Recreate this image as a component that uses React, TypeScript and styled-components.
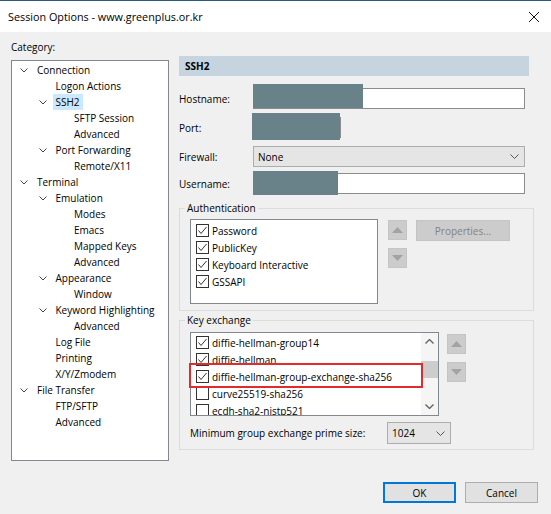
import React from "react";
import styled, { createGlobalStyle } from "styled-components";

const GlobalStyle = createGlobalStyle`
  html, body { margin: 0; padding: 0; background: #f0f0f0; }
  body { font-family: "Open Sans", "Noto Sans", sans-serif; font-size: 10px; color: #000; }
  * { box-sizing: border-box; }
`;

const Window = styled.div`
  width: 551px;
  height: 514px;
  background: #f0f0f0;
  display: flex;
  flex-direction: column;
  overflow: hidden;
`;

const TitleBar = styled.div`
  height: 32px;
  background: #fff;
  border-top: 1px solid #2b5a80;
  display: flex;
  align-items: center;
  justify-content: space-between;
  padding: 0 10px 0 8px;
`;

const TitleText = styled.span`
  font-size: 10.8px;
  color: #000;
`;

const CloseBtn = styled.span`
  display: flex;
  width: 12px;
  height: 12px;
  margin-right: 1px;
`;

const Content = styled.div`
  display: flex;
  height: 429px;
`;

const LeftCol = styled.div`
  width: 169px;
  padding: 8px 0 0 11px;
  display: flex;
  flex-direction: column;
`;

const CatLabel = styled.div`
  line-height: 14px;
  height: 14px;
  margin-bottom: 6px;
`;

const TreeBox = styled.div`
  width: 158px;
  height: 401px;
  background: #fff;
  border: 1px solid #828790;
  padding-top: 1px;
`;

const TreeRow = styled.div<{ $level: number }>`
  height: 16px;
  line-height: 16px;
  display: flex;
  align-items: center;
  padding-left: ${(p) => 8 + p.$level * 18.5}px;
  white-space: nowrap;
`;

const ChevSlot = styled.span`
  width: 17px;
  flex: none;
  display: flex;
  align-items: center;
`;

const TreeLabel = styled.span<{ $selected?: boolean }>`
  padding: 0 3px;
  margin-left: -3px;
  height: 16px;
  background: ${(p) => (p.$selected ? "#cce8ff" : "transparent")};
`;

const RightCol = styled.div`
  margin-left: 10px;
  padding-top: 24px;
  width: 355px;
  display: flex;
  flex-direction: column;
`;

const Header = styled.div`
  width: 350px;
  height: 20px;
  background: #c6d4e0;
  font-weight: 700;
  line-height: 20px;
  padding-left: 6px;
`;

const Form = styled.div`
  margin-top: 12px;
  display: flex;
  flex-direction: column;
`;

const FormRow = styled.div<{ $mt: number }>`
  display: flex;
  align-items: center;
  height: 21px;
  margin-top: ${(p) => p.$mt}px;
`;

const FieldLabel = styled.span`
  width: 74px;
  flex: none;
`;

const FieldWrap = styled.div<{ $w: number }>`
  position: relative;
  width: ${(p) => p.$w}px;
  height: 21px;
`;

const TextInput = styled.div`
  width: 100%;
  height: 100%;
  background: #fff;
  border: 1px solid #8c8c8c;
`;

const Redact = styled.div<{ $l: number; $t: number; $w: number; $h: number }>`
  position: absolute;
  left: ${(p) => p.$l}px;
  top: ${(p) => p.$t}px;
  width: ${(p) => p.$w}px;
  height: ${(p) => p.$h}px;
  background: #698189;
`;

const Select = styled.div<{ $w: number; $h: number }>`
  width: ${(p) => p.$w}px;
  height: ${(p) => p.$h}px;
  background: #e5e5e5;
  border: 1px solid #adadad;
  display: flex;
  align-items: center;
  justify-content: space-between;
  padding: 0 5px 0 4px;
  flex: none;
`;

const Group = styled.fieldset<{ $mt: number }>`
  margin: ${(p) => p.$mt}px 0 0 0;
  padding: 0;
  border: 1px solid #dcdcdc;
  width: 355px;
  min-width: 0;
`;

const Legend = styled.legend`
  margin-left: 5px;
  padding: 0 2px;
  line-height: 14px;
  height: 14px;
`;

const GroupInner = styled.div<{ $pt: number; $pb: number }>`
  padding: ${(p) => p.$pt}px 10px ${(p) => p.$pb}px 10px;
  display: flex;
  flex-direction: column;
`;

const GroupRow = styled.div`
  display: flex;
  align-items: flex-start;
`;

const ListBox = styled.div<{ $w: number; $h: number; $pt: number }>`
  position: relative;
  width: ${(p) => p.$w}px;
  height: ${(p) => p.$h}px;
  background: #fff;
  border: 1px solid #828790;
  padding-top: ${(p) => p.$pt}px;
  display: flex;
  flex: none;
`;

const ListItems = styled.div`
  flex: 1;
  overflow: hidden;
`;

const ListItem = styled.div`
  height: 17px;
  display: flex;
  align-items: center;
  padding-left: 5px;
  white-space: nowrap;
`;

const CheckBox = styled.span`
  width: 13px;
  height: 13px;
  border: 1px solid #333;
  background: #fff;
  margin-right: 3px;
  flex: none;
  display: flex;
`;

const ScrollBar = styled.div`
  width: 17px;
  margin-top: -1px;
  height: calc(100% + 1px);
  background: #f5f5f5;
  display: flex;
  flex-direction: column;
  align-items: center;
  justify-content: space-between;
  position: relative;
  flex: none;
`;

const ScrollArrow = styled.span`
  height: 17px;
  display: flex;
  align-items: center;
  justify-content: center;
`;

const Thumb = styled.div`
  position: absolute;
  left: 0;
  top: 28px;
  width: 17px;
  height: 17px;
  background: #cdcdcd;
`;

const RedBox = styled.div`
  position: absolute;
  left: -2px;
  top: 30px;
  width: 234px;
  height: 25px;
  border: 2px solid #e32b2b;
  pointer-events: none;
`;

const ArrowCol = styled.div<{ $ml: number; $mt: number }>`
  display: flex;
  flex-direction: column;
  gap: 8px;
  margin-left: ${(p) => p.$ml}px;
  margin-top: ${(p) => p.$mt}px;
`;

const ArrowBtn = styled.div`
  width: 19px;
  height: 20px;
  background: #cccccc;
  border: 1px solid #c4c4c4;
  display: flex;
  align-items: center;
  justify-content: center;
`;

const PropsBtn = styled.div`
  margin-left: 9px;
  margin-top: 1px;
  width: 94px;
  height: 21px;
  background: #cccccc;
  border: 1px solid #c4c4c4;
  color: #838383;
  display: flex;
  align-items: center;
  justify-content: center;
`;

const MinRow = styled.div`
  display: flex;
  align-items: center;
  margin-top: 6px;
`;

const MinLabel = styled.span`
  width: 197px;
  flex: none;
`;

const Footer = styled.div`
  display: flex;
  justify-content: flex-end;
  gap: 9px;
  padding-right: 13px;
  margin-top: 21px;
`;

const DlgButton = styled.div<{ $default?: boolean }>`
  width: 73px;
  height: 21px;
  background: #e1e1e1;
  border: ${(p) => (p.$default ? "2px solid #0078d7" : "1px solid #adadad")};
  display: flex;
  align-items: center;
  justify-content: center;
`;

const Chevron = () => (
  <svg width="8" height="5" viewBox="0 0 8 5">
    <path d="M0.5 0.5 L4 4 L7.5 0.5" fill="none" stroke="#444" strokeWidth="1" />
  </svg>
);

const SelectChevron = () => (
  <svg width="9" height="5" viewBox="0 0 9 5">
    <path d="M0.5 0.5 L4.5 4.5 L8.5 0.5" fill="none" stroke="#555" strokeWidth="1" />
  </svg>
);

const Check = () => (
  <svg width="11" height="11" viewBox="0 0 11 11">
    <path d="M1.5 5.5 L4 8.5 L9.5 2" fill="none" stroke="#333" strokeWidth="1" />
  </svg>
);

const Tri = ({ up }: { up?: boolean }) => (
  <svg width="11" height="6" viewBox="0 0 11 6">
    <path d={up ? "M0 6 L5.5 0 L11 6 Z" : "M0 0 L5.5 6 L11 0 Z"} fill="#a3a3a3" />
  </svg>
);

const SmallArrow = ({ up }: { up?: boolean }) => (
  <svg width="9" height="5" viewBox="0 0 9 5">
    <path d={up ? "M0.5 4.5 L4.5 0.5 L8.5 4.5" : "M0.5 0.5 L4.5 4.5 L8.5 0.5"} fill="none" stroke="#606060" strokeWidth="1.3" />
  </svg>
);

type Node = { label: string; level: number; open?: boolean; selected?: boolean };

const tree: Node[] = [
  { label: "Connection", level: 0, open: true },
  { label: "Logon Actions", level: 1 },
  { label: "SSH2", level: 1, open: true, selected: true },
  { label: "SFTP Session", level: 2 },
  { label: "Advanced", level: 2 },
  { label: "Port Forwarding", level: 1, open: true },
  { label: "Remote/X11", level: 2 },
  { label: "Terminal", level: 0, open: true },
  { label: "Emulation", level: 1, open: true },
  { label: "Modes", level: 2 },
  { label: "Emacs", level: 2 },
  { label: "Mapped Keys", level: 2 },
  { label: "Advanced", level: 2 },
  { label: "Appearance", level: 1, open: true },
  { label: "Window", level: 2 },
  { label: "Keyword Highlighting", level: 1, open: true },
  { label: "Advanced", level: 2 },
  { label: "Log File", level: 1 },
  { label: "Printing", level: 1 },
  { label: "X/Y/Zmodem", level: 1 },
  { label: "File Transfer", level: 0, open: true },
  { label: "FTP/SFTP", level: 1 },
  { label: "Advanced", level: 1 },
];

const auth = ["Password", "PublicKey", "Keyboard Interactive", "GSSAPI"];

const kex: { label: string; checked: boolean }[] = [
  { label: "diffie-hellman-group14", checked: true },
  { label: "diffie-hellman", checked: true },
  { label: "diffie-hellman-group-exchange-sha256", checked: true },
  { label: "curve25519-sha256", checked: false },
  { label: "ecdh-sha2-nistp521", checked: false },
];

export default function App() {
  return (
    <Window>
      <GlobalStyle />
      <TitleBar>
        <TitleText>Session Options - www.greenplus.or.kr</TitleText>
        <CloseBtn>
          <svg width="12" height="12" viewBox="0 0 12 12">
            <path d="M1 1 L11 11 M11 1 L1 11" stroke="#111" strokeWidth="1" />
          </svg>
        </CloseBtn>
      </TitleBar>
      <Content>
        <LeftCol>
          <CatLabel>Category:</CatLabel>
          <TreeBox>
            {tree.map((n, i) => (
              <TreeRow key={i} $level={n.level}>
                <ChevSlot>{n.open ? <Chevron /> : null}</ChevSlot>
                <TreeLabel $selected={n.selected}>{n.label}</TreeLabel>
              </TreeRow>
            ))}
          </TreeBox>
        </LeftCol>
        <RightCol>
          <Header>SSH2</Header>
          <Form>
            <FormRow $mt={0}>
              <FieldLabel>Hostname:</FieldLabel>
              <FieldWrap $w={272}>
                <TextInput />
                <Redact $l={0} $t={-4} $w={110} $h={24} />
              </FieldWrap>
            </FormRow>
            <FormRow $mt={8}>
              <FieldLabel>Port:</FieldLabel>
              <FieldWrap $w={88}>
                <TextInput />
                <Redact $l={-1} $t={-4} $w={88} $h={27} />
              </FieldWrap>
            </FormRow>
            <FormRow $mt={8}>
              <FieldLabel>Firewall:</FieldLabel>
              <Select $w={272} $h={21}>
                <span>None</span>
                <SelectChevron />
              </Select>
            </FormRow>
            <FormRow $mt={6}>
              <FieldLabel>Username:</FieldLabel>
              <FieldWrap $w={272}>
                <TextInput />
                <Redact $l={0} $t={-2} $w={85} $h={24} />
              </FieldWrap>
            </FormRow>
          </Form>
          <Group $mt={7}>
            <Legend>Authentication</Legend>
            <GroupInner $pt={4} $pb={6}>
              <GroupRow>
                <ListBox $w={188} $h={85} $pt={2}>
                  <ListItems>
                    {auth.map((a) => (
                      <ListItem key={a}>
                        <CheckBox>
                          <Check />
                        </CheckBox>
                        {a}
                      </ListItem>
                    ))}
                  </ListItems>
                </ListBox>
                <ArrowCol $ml={10} $mt={1}>
                  <ArrowBtn>
                    <Tri up />
                  </ArrowBtn>
                  <ArrowBtn>
                    <Tri />
                  </ArrowBtn>
                </ArrowCol>
                <PropsBtn>Properties...</PropsBtn>
              </GroupRow>
            </GroupInner>
          </Group>
          <Group $mt={2}>
            <Legend>Key exchange</Legend>
            <GroupInner $pt={5} $pb={5}>
              <GroupRow>
                <ListBox $w={249} $h={84} $pt={1}>
                  <ListItems>
                    {kex.map((k) => (
                      <ListItem key={k.label}>
                        <CheckBox>{k.checked ? <Check /> : null}</CheckBox>
                        {k.label}
                      </ListItem>
                    ))}
                  </ListItems>
                  <ScrollBar>
                    <ScrollArrow>
                      <SmallArrow up />
                    </ScrollArrow>
                    <Thumb />
                    <ScrollArrow>
                      <SmallArrow />
                    </ScrollArrow>
                  </ScrollBar>
                  <RedBox />
                </ListBox>
                <ArrowCol $ml={8} $mt={2}>
                  <ArrowBtn>
                    <Tri up />
                  </ArrowBtn>
                  <ArrowBtn>
                    <Tri />
                  </ArrowBtn>
                </ArrowCol>
              </GroupRow>
              <MinRow>
                <MinLabel>Minimum group exchange prime size:</MinLabel>
                <Select $w={64} $h={22}>
                  <span>1024</span>
                  <SelectChevron />
                </Select>
              </MinRow>
            </GroupInner>
          </Group>
        </RightCol>
      </Content>
      <Footer>
        <DlgButton $default>OK</DlgButton>
        <DlgButton>Cancel</DlgButton>
      </Footer>
    </Window>
  );
}
